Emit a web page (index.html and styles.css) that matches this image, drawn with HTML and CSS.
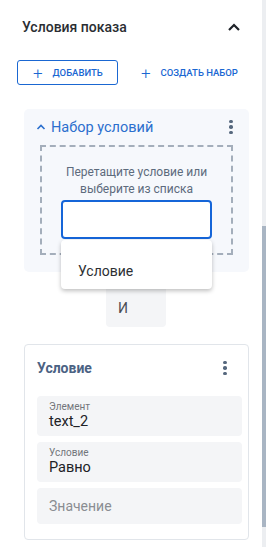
FILE: index.html
```html
<!DOCTYPE html>
<html>
<head>
    <meta charset="UTF-8"/>
    <title>Условия показа</title>
    <link rel="stylesheet" href="styles.css">
</head>
<body>
<div class="page">
    <div class="main">
        <div class="head">
            <div class="head-title">Условия показа</div>
            <svg class="chevron" width="14" height="10" viewBox="0 0 14 10">
                <path d="M2 8 L7 3 L12 8" fill="none" stroke="#1f2329" stroke-width="2.2"/>
            </svg>
        </div>

        <div class="actions">
            <div class="btn btn-outline">
                <span class="plus">+</span>Добавить
            </div>
            <div class="btn btn-text">
                <span class="plus">+</span>Создать набор
            </div>
        </div>

        <div class="set">
            <div class="set-head">
                <svg class="set-chevron" width="10" height="8" viewBox="0 0 10 8">
                    <path d="M1.5 6 L5 2.5 L8.5 6" fill="none" stroke="#2b6fce" stroke-width="1.6"/>
                </svg>
                <div class="set-title">Набор условий</div>
                <div class="kebab"><i></i><i></i><i></i></div>
            </div>
            <div class="drop">
                <div class="drop-hint">Перетащите условие или<br/>выберите из списка</div>
                <div class="select">
                    <div class="select-input"></div>
                    <div class="menu">
                        <div class="menu-item">Условие</div>
                    </div>
                </div>
            </div>
        </div>

        <div class="and">И</div>

        <div class="card">
            <div class="card-head">
                <div class="card-title">Условие</div>
                <div class="kebab"><i></i><i></i><i></i></div>
            </div>
            <div class="field">
                <div class="field-label">Элемент</div>
                <div class="field-value">text_2</div>
            </div>
            <div class="field">
                <div class="field-label">Условие</div>
                <div class="field-value">Равно</div>
            </div>
            <div class="field field-empty">
                <div class="field-placeholder">Значение</div>
            </div>
        </div>
    </div>
    <div class="track">
        <div class="thumb"></div>
    </div>
</div>
</body>
</html>
```

FILE: styles.css
```css
body {
    margin: 0px;
    padding: 0px;
    font-family: Roboto, "Liberation Sans", sans-serif;
    font-size: 14px;
    color: #222;
    background-color: #fff;
}

.page {
    display: flex;
}

.main {
    width: 262px;
}

.track {
    width: 4px;
    height: 547px;
    padding-top: 226px;
    box-sizing: border-box;
    background-color: #eceef1;
}
.thumb {
    height: 301px;
    background-color: #a9b5c3;
}

.head {
    display: flex;
    justify-content: space-between;
    align-items: center;
    height: 54px;
    padding: 0px 21px 0px 22px;
}
.head-title {
    font-size: 14px;
    font-weight: 500;
    color: #2a2d32;
}

.actions {
    display: flex;
    align-items: center;
    margin-top: 6px;
    padding-left: 17px;
}

.btn {
    display: flex;
    align-items: center;
    height: 25px;
    box-sizing: border-box;
    font-size: 9.5px;
    font-weight: 500;
    text-transform: uppercase;
    color: #1a67d2;
}
.btn-outline {
    width: 101px;
    padding-left: 15px;
    border: solid 1px #1a67d2;
    border-radius: 3px;
}
.btn-text {
    margin-left: 23px;
}
.plus {
    font-size: 17px;
    font-weight: 300;
    margin-right: 10px;
    line-height: 20px;
}

.set {
    margin: 24px 13px 0px 24px;
    padding: 0px 16px 17px 16px;
    background-color: #f6f8fc;
    border-radius: 5px;
}
.set-head {
    display: flex;
    align-items: center;
    height: 36px;
    margin-left: -4px;
    margin-right: -2px;
}
.set-chevron {
    margin-right: 5px;
}
.set-title {
    flex: auto;
    font-size: 14.5px;
    color: #2b6fce;
}

.kebab {
    display: flex;
    flex-direction: column;
    align-items: center;
    width: 8px;
}
.kebab i {
    width: 3.5px;
    height: 3.5px;
    margin: 1px 0px;
    border-radius: 50%;
    background-color: #56687e;
}

.drop {
    height: 110px;
    box-sizing: border-box;
    padding-top: 17px;
    border: dashed 2px #a4aebb;
    text-align: center;
}
.drop-hint {
    font-size: 12px;
    line-height: 17px;
    color: #5d6b7d;
}

.select {
    position: relative;
    width: 151px;
    margin: 2px auto 0px auto;
}
.select-input {
    height: 39px;
    box-sizing: border-box;
    border: solid 2px #1565d8;
    border-radius: 4px;
    background-color: #fff;
}
.menu {
    position: absolute;
    top: 40px;
    left: 0px;
    right: 0px;
    height: 49px;
    box-sizing: border-box;
    padding: 22px 0px 0px 17px;
    text-align: left;
    background-color: #fff;
    border-radius: 4px;
    box-shadow: 0px 2px 4px rgba(0, 0, 0, 0.25);
    z-index: 2;
}
.menu-item {
    font-size: 14px;
    line-height: 18px;
    color: #2d2f33;
}

.and {
    width: 60px;
    height: 41px;
    box-sizing: border-box;
    margin: 14px auto 0px 106px;
    padding: 14px 0px 0px 12px;
    font-size: 14px;
    color: #4a4d52;
    background-color: #f4f5f7;
    border-radius: 0px 0px 4px 4px;
}

.card {
    margin: 17px 13px 0px 24px;
    padding: 0px 6px 15px 12px;
    border: solid 1px #e1e5ea;
    border-radius: 4px;
}
.card-head {
    display: flex;
    justify-content: space-between;
    align-items: center;
    height: 46px;
    margin-bottom: 5px;
    padding-right: 13px;
}
.card-title {
    font-size: 14px;
    font-weight: bold;
    color: #4b6283;
}

.field {
    height: 40px;
    box-sizing: border-box;
    margin-bottom: 6px;
    padding: 5px 0px 0px 12px;
    background-color: #f4f5f7;
    border-radius: 4px;
}
.field-label {
    font-size: 10px;
    line-height: 12px;
    color: #73767b;
}
.field-value {
    font-size: 14.5px;
    line-height: 18px;
    color: #202226;
}
.field-empty {
    height: 36px;
    margin-bottom: 0px;
    padding-top: 9px;
}
.field-placeholder {
    font-size: 14px;
    line-height: 18px;
    color: #8a8d92;
}
```
